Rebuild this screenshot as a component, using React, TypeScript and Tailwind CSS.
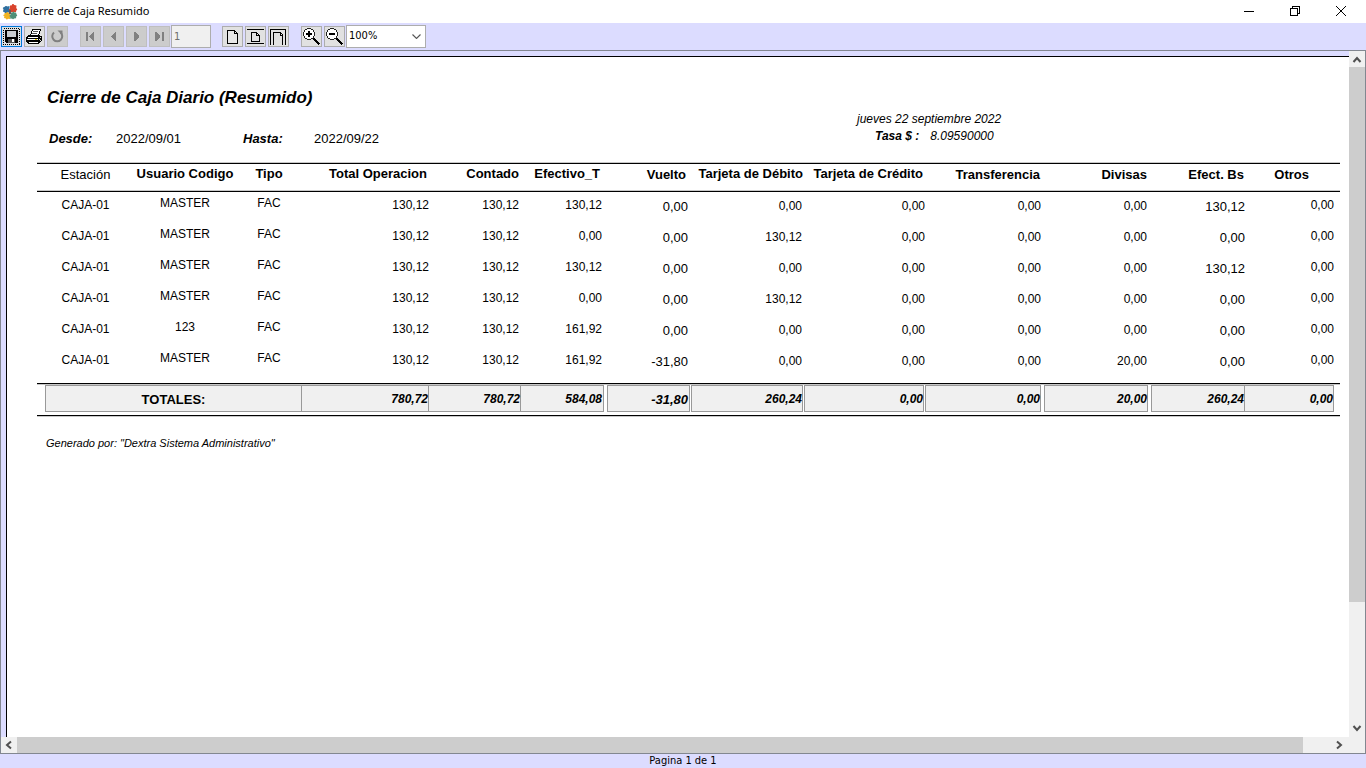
import type { ReactNode } from "react";

type Column = {
  label: string;
  width: string;
  head: string;
  cell: string;
};

const columns: Column[] = [
  { label: "Estación", width: "w-[97px]", head: "text-center font-normal pt-[3px]", cell: "text-center text-[12px] pt-[5px]" },
  { label: "Usuario Codigo", width: "w-[102px]", head: "text-center pt-[2px]", cell: "text-center text-[12px] pt-[3px]" },
  { label: "Tipo", width: "w-[66px]", head: "text-center pt-[2px]", cell: "text-center text-[12px] pt-[3px]" },
  { label: "Total Operacion", width: "w-[127px]", head: "text-right pr-[2px] pt-[2px]", cell: "text-right text-[12px] pt-[5px]" },
  { label: "Contado", width: "w-[92px]", head: "text-right pr-[2px] pt-[2px]", cell: "text-right text-[12px] pr-[2px] pt-[5px]" },
  { label: "Efectivo_T", width: "w-[83px]", head: "text-right pr-1 pt-[2px]", cell: "text-right text-[12px] pr-[2px] pt-[5px]" },
  { label: "Vuelto", width: "w-[86px]", head: "text-right pr-1 pt-[3px]", cell: "text-right text-[13px] pr-[2px] pt-[7px]" },
  { label: "Tarjeta de Débito", width: "w-[113px]", head: "text-right pt-[2px]", cell: "text-right text-[12px] pr-px pt-[6px]" },
  { label: "Tarjeta de Crédito", width: "w-[122px]", head: "text-right pr-[2px] pt-[2px]", cell: "text-right text-[12px] pt-[6px]" },
  { label: "Transferencia", width: "w-[116px]", head: "text-right pr-px pt-[3px]", cell: "text-right text-[12px] pt-[6px]" },
  { label: "Divisas", width: "w-[107px]", head: "text-right pr-px pt-[3px]", cell: "text-right text-[12px] pr-px pt-[6px]" },
  { label: "Efect. Bs", width: "w-[97px]", head: "text-right pr-px pt-[3px]", cell: "text-right text-[13px] pt-[7px]" },
  { label: "Otros", width: "w-[95px]", head: "text-right pr-[31px] pt-[3px]", cell: "text-right text-[12px] pr-[6px] pt-[5px]" },
];

const rows: string[][] = [
  ["CAJA-01", "MASTER", "FAC", "130,12", "130,12", "130,12", "0,00", "0,00", "0,00", "0,00", "0,00", "130,12", "0,00"],
  ["CAJA-01", "MASTER", "FAC", "130,12", "130,12", "0,00", "0,00", "130,12", "0,00", "0,00", "0,00", "0,00", "0,00"],
  ["CAJA-01", "MASTER", "FAC", "130,12", "130,12", "130,12", "0,00", "0,00", "0,00", "0,00", "0,00", "130,12", "0,00"],
  ["CAJA-01", "MASTER", "FAC", "130,12", "130,12", "0,00", "0,00", "130,12", "0,00", "0,00", "0,00", "0,00", "0,00"],
  ["CAJA-01", "123", "FAC", "130,12", "130,12", "161,92", "0,00", "0,00", "0,00", "0,00", "0,00", "0,00", "0,00"],
  ["CAJA-01", "MASTER", "FAC", "130,12", "130,12", "161,92", "-31,80", "0,00", "0,00", "0,00", "20,00", "0,00", "0,00"],
];

const totals = [
  { value: "780,72", box: "border-l-0 text-[12px]" },
  { value: "780,72", box: "border-l-0 text-[12px]" },
  { value: "584,08", box: "border-l-0 text-[12px] pr-px" },
  { value: "-31,80", box: "ml-[3px] text-[13px] pr-px" },
  { value: "260,24", box: "ml-px text-[12px]" },
  { value: "0,00", box: "ml-px mr-px text-[12px]" },
  { value: "0,00", box: "text-[12px]" },
  { value: "20,00", box: "ml-[3px] text-[12px]" },
  { value: "260,24", box: "ml-[3px] text-[12px]" },
  { value: "0,00", box: "mr-[6px] border-l-0 text-[12px]" },
];

function Icon({ children, size = "size-[19px]" }: { children: ReactNode; size?: string }) {
  return (
    <svg viewBox="0 0 19 19" className={size} shapeRendering="crispEdges" fill="none" aria-hidden="true">
      {children}
    </svg>
  );
}

function ToolButton({ label, disabled, active, children }: { label: string; disabled?: boolean; active?: boolean; children: ReactNode }) {
  const tone = active ? "border-[#0078d7] bg-[#dcdfe3]" : disabled ? "border-[#bfbfbf] bg-[#cccccc]" : "border-[#adadad] bg-[#e1e1e1]";
  return (
    <button type="button" aria-label={label} disabled={disabled} className={`flex size-[21px] items-center justify-center border ${tone}`}>
      {children}
    </button>
  );
}

function AppLogo() {
  return (
    <svg viewBox="0 0 16 16" className="size-4" aria-hidden="true">
      <path d="M3 2.500c1-.8 2-.3 2.600 0L7.500 2v3.200c1 .2 1 1.700 0 2V8.500H5c-.3 1-2 1-2.200 0L1 7.500 1.500 5C.3 4.500.8 3 2 3.300z" fill="#2f6f9f" />
      <path d="M8 1.500l2-.3c-.5-1.500 2-1.700 2.200-.1l2.300.4-.3 2.800c1.400.2 1.200 2 .1 2.100l-.3 1.600H8V6.500C6.500 6.500 6.500 4.800 8 4.800z" fill="#d9432c" />
      <path d="M2.500 9h2c-.3-1.300 2-1.300 1.800 0H8v2c1.300 0 1.300 1.800 0 1.900V15l-2-.2c-.4 1.200-2 1-2-.2L2 14l.4-1.700C.9 12 1 10.300 2.500 10.500z" fill="#f0b323" />
      <path d="M8.500 8.500h2c0-1.200 1.700-1.200 1.800 0H14l.6 2c1 .4.6 1.700-.3 1.800L14 14.300l-2 .3c-.3 1-1.700 1-1.900 0l-1.900.2v-2c-1-.2-1-1.600.2-1.800z" fill="#4f8f78" />
      <path d="M7 6h2v4H7z" fill="#6a5a56" />
    </svg>
  );
}

function Magnifier({ plus }: { plus?: boolean }) {
  return (
    <Icon>
      <path d="M5 2h4v1h2v2h1v4h-1v2H9v1H5v-1H3V9H2V5h1V3h2z" fill="#fff" />
      <path d="M5 1.500h4M3 2.500h2M9 2.500h2M2.500 3v2M11.500 3v2M1.500 5v4M12.500 5v4M2.500 9v2M11.500 9v2M3 11.500h2M9 11.500h2M5 12.500h4" stroke="#222" />
      <path d="M4 6h6v2H4z" fill="#000" />
      {plus && <path d="M6 4h2v6H6z" fill="#000" />}
      <path d="M11 11h2v1h1v1h1v1h1v1h1v1h1v1h-1v1h-1v-1h-1v-1h-1v-1h-1v-1h-1v-1h-1z" fill="#000" />
    </Icon>
  );
}

function Toolbar() {
  return (
    <div className="flex h-[27px] shrink-0 items-center gap-[11px] px-px font-['DejaVu_Sans_Condensed','DejaVu_Sans',sans-serif] text-[11px]">
      <div className="flex gap-[2px]">
        <ToolButton label="Guardar" active>
          <Icon>
            <rect x="1.500" y="1.500" width="16" height="16" stroke="#000" strokeDasharray="1 1" />
            <path d="M3 3h13v13H4l-1-1z" fill="#000" />
            <path d="M5 4h9v6H5z" fill="#c9cdd2" />
            <path d="M6 12h7v4H6z" fill="#555" />
            <path d="M10 12h2v3h-2z" fill="#fff" />
          </Icon>
        </ToolButton>
        <ToolButton label="Imprimir">
          <Icon>
            <path d="M5.500 8.500l2-6h8L13.500 8.500" fill="#fff" stroke="#000" />
            <path d="M8 4.500h5M7 6.500h5" stroke="#555" />
            <path d="M3 8h12v1h2v5h-1v1h-1v1h-1v1H3v-1H2v-1H1v-5h1V9h1z" fill="#000" />
            <path d="M3 10h10v1H3zM2 12h11v1H2zM4 15h9v1H4z" fill="#fff" />
            <path d="M10 12h2v1h-2z" fill="#f2d500" />
            <path d="M15 10h1v1h-1zM14 12h1v1h-1zM15 13h1v1h-1z" fill="#ddd" />
          </Icon>
        </ToolButton>
        <ToolButton label="Actualizar" disabled>
          <svg viewBox="0 0 19 19" className="size-[19px]" fill="none" aria-hidden="true">
            <path d="M6 5.500a5 5 0 1 0 6.500 0" stroke="#808080" strokeWidth="2" />
            <path d="M9.500 3.500h5v5z" fill="#808080" />
          </svg>
        </ToolButton>
      </div>
      <div className="ml-px flex items-center">
        <div className="mr-px flex gap-[2px]">
          <ToolButton label="Primera página" disabled>
            <Icon><path d="M5 5h2v9H5zM13 5v9H12L8 10V9l4-4z" fill="#808080" /></Icon>
          </ToolButton>
          <ToolButton label="Página anterior" disabled>
            <Icon><path d="M12 5v9H11L7 10V9l4-4z" fill="#808080" /></Icon>
          </ToolButton>
          <ToolButton label="Página siguiente" disabled>
            <Icon><path d="M7 5v9h1l4-4V9L8 5z" fill="#808080" /></Icon>
          </ToolButton>
          <ToolButton label="Última página" disabled>
            <Icon><path d="M5 5v9h1l4-4V9L6 5zM12 5h2v9h-2z" fill="#808080" /></Icon>
          </ToolButton>
        </div>
        <input
          aria-label="Número de página"
          defaultValue="1"
          disabled
          className="h-[23px] w-10 border border-[#adadad] bg-[#f0f0f0] px-[2px] text-[#6d6d6d]"
        />
      </div>
      <div className="flex gap-[2px]">
        <ToolButton label="Tamaño real">
          <Icon>
            <path d="M4.500 3.500h7l3 3v10h-10z" fill="#fff" fillOpacity="0.2" stroke="#000" />
            <path d="M11.500 4v2.500H14" stroke="#000" />
          </Icon>
        </ToolButton>
        <ToolButton label="Ajustar página">
          <Icon>
            <path d="M1 2.500h17M1 16.500h17M5.500 5.500h5l3 3v6h-8z" stroke="#000" />
            <path d="M10.500 6v2.500H13" stroke="#000" />
          </Icon>
        </ToolButton>
        <ToolButton label="Ajustar ancho">
          <Icon>
            <path d="M1.500 18V2.500h15V18M4.500 18V5.500h7l2 2V18" stroke="#000" />
            <path d="M11.500 5v3H14" stroke="#000" />
          </Icon>
        </ToolButton>
      </div>
      <div className="ml-px flex items-center">
        <div className="mr-px flex gap-[2px]">
          <ToolButton label="Acercar">
            <Magnifier plus />
          </ToolButton>
          <ToolButton label="Alejar">
            <Magnifier />
          </ToolButton>
        </div>
        <div className="grid">
          <select
            aria-label="Zoom"
            defaultValue="100%"
            className="col-start-1 row-start-1 h-[23px] w-20 appearance-none border border-[#adadad] bg-white px-[2px]"
          >
            <option>50%</option>
            <option>100%</option>
            <option>200%</option>
          </select>
          <svg viewBox="0 0 9 5" className="pointer-events-none col-start-1 row-start-1 mr-[5px] h-[5px] w-[9px] self-center justify-self-end" fill="none" aria-hidden="true">
            <path d="M.5.5l4 4 4-4" stroke="#555" strokeWidth="1.100" />
          </svg>
        </div>
      </div>
    </div>
  );
}

function ScrollArrow({ label, d }: { label: string; d: string }) {
  return (
    <button type="button" aria-label={label} className="flex size-4 shrink-0 items-center justify-center">
      <svg viewBox="0 0 16 16" className="size-4" fill="none" aria-hidden="true">
        <path d={d} stroke="#505050" strokeWidth="2" />
      </svg>
    </button>
  );
}

function Report() {
  return (
    <article className="min-w-0 flex-1 overflow-hidden border-t border-l border-black bg-white pr-[9px] pl-[30px] font-['Liberation_Sans',Arial,sans-serif] text-black">
      <header className="flex h-[106px] pl-[10px]">
        <div className="w-[810px] shrink-0 pt-[31px]">
          <h1 className="text-[17px] leading-5 font-bold italic">Cierre de Caja Diario (Resumido)</h1>
          <dl className="mt-[21px] flex pl-[2px] text-[13px] leading-5">
            <dt className="w-[67px] font-bold italic">Desde:</dt>
            <dd className="w-[127px]">2022/09/01</dd>
            <dt className="w-[71px] font-bold italic">Hasta:</dt>
            <dd>2022/09/22</dd>
          </dl>
        </div>
        <div className="pt-[54px] text-[12px] leading-[17px] italic">
          <p>jueves 22 septiembre 2022</p>
          <p className="flex gap-[11px] pl-[18px]">
            <span className="font-bold">Tasa $ :</span>
            <span>8.09590000</span>
          </p>
        </div>
      </header>
      <table className="w-full table-fixed border-separate border-spacing-0 whitespace-nowrap">
        <colgroup>
          {columns.map((c) => (
            <col key={c.label} className={c.width} />
          ))}
        </colgroup>
        <thead>
          <tr className="h-[29px]">
            {columns.map((c) => (
              <th
                key={c.label}
                scope="col"
                className={`border-y border-black align-top text-[13px] leading-[15px] shadow-[0_-1px_#c8c8c8,inset_0_-1px_#c8c8c8] ${c.head}`}
              >
                {c.label}
              </th>
            ))}
          </tr>
        </thead>
        <tbody>
          {rows.map((row, r) => (
            <tr key={r} className="h-[31px]">
              {row.map((value, i) => (
                <td key={i} className={`align-top leading-4 ${columns[i].cell}`}>
                  {value}
                </td>
              ))}
            </tr>
          ))}
          <tr className="h-[5px]" aria-hidden="true">
            <td colSpan={13} className="p-0" />
          </tr>
        </tbody>
        <tfoot>
          <tr>
            <th colSpan={3} scope="row" className="border-y border-black pt-px pb-[3px] pl-2 text-[13px] shadow-[0_1px_#c8c8c8,inset_0_1px_#c8c8c8]">
              <div className="h-[27px] border border-[#999] bg-[#f0f0f0] text-center leading-[27px]">TOTALES:</div>
            </th>
            {totals.map((t, i) => (
              <td key={i} className="border-y border-black pt-px pb-[3px] shadow-[0_1px_#c8c8c8,inset_0_1px_#c8c8c8]">
                <div className={`h-[27px] border border-[#999] bg-[#f0f0f0] text-right leading-[27px] font-bold italic ${t.box}`}>{t.value}</div>
              </td>
            ))}
          </tr>
        </tfoot>
      </table>
      <p className="mt-[19px] pl-[9px] text-[11px] leading-4 italic">Generado por: "Dextra Sistema Administrativo"</p>
    </article>
  );
}

export default function App() {
  return (
    <div className="flex h-screen flex-col overflow-hidden bg-[#dcdcff] text-black">
      <header className="flex h-[23px] shrink-0 items-center bg-white pl-[2px]">
        <AppLogo />
        <h1 className="ml-[5px] flex-1 font-['Noto_Sans',sans-serif] text-[11px]">Cierre de Caja Resumido</h1>
        <div className="flex h-[21px] self-start pr-[2px]">
          <button type="button" aria-label="Minimizar" className="flex w-[46px] items-center justify-center">
            <svg viewBox="0 0 10 10" className="size-[10px]" shapeRendering="crispEdges" aria-hidden="true"><path d="M0 5h10v1H0z" /></svg>
          </button>
          <button type="button" aria-label="Restaurar" className="flex w-[46px] items-center justify-center">
            <svg viewBox="0 0 10 10" className="size-[10px]" shapeRendering="crispEdges" fill="none" stroke="#000" aria-hidden="true">
              <path d="M.5 2.500h7v7h-7zM2.500 2V.500h7v7H8" />
            </svg>
          </button>
          <button type="button" aria-label="Cerrar" className="flex w-[46px] items-center justify-center">
            <svg viewBox="0 0 10 10" className="size-[10px]" fill="none" stroke="#000" aria-hidden="true"><path d="M0 0l10 10M10 0L0 10" /></svg>
          </button>
        </div>
      </header>
      <Toolbar />
      <main className="flex min-h-0 flex-1 flex-col border border-[#828790]">
        <div className="flex min-h-0 flex-1">
          <div className="flex min-w-0 flex-1 pt-[5px] pl-[5px]">
            <Report />
          </div>
          <div className="flex w-4 shrink-0 flex-col bg-[#f0f0f0]">
            <ScrollArrow label="Subir" d="M4.500 11l3.500-4 3.500 4" />
            <div className="flex-[534] bg-[#cdcdcd]" />
            <div className="flex-[119]" />
            <ScrollArrow label="Bajar" d="M4.500 5l3.500 4 3.500-4" />
          </div>
        </div>
        <div className="flex h-4 shrink-0 bg-[#f0f0f0]">
          <ScrollArrow label="Izquierda" d="M10 4.500L6 8l4 3.500" />
          <div className="flex-[1286] bg-[#cdcdcd]" />
          <div className="flex-[28]" />
          <ScrollArrow label="Derecha" d="M6 4.500L10 8l-4 3.500" />
          <div className="w-[18px] shrink-0" />
        </div>
      </main>
      <footer className="flex h-[14px] shrink-0 items-center justify-center font-['DejaVu_Sans_Condensed','DejaVu_Sans',sans-serif] text-[11px]">
        Pagina 1 de 1
      </footer>
    </div>
  );
}
